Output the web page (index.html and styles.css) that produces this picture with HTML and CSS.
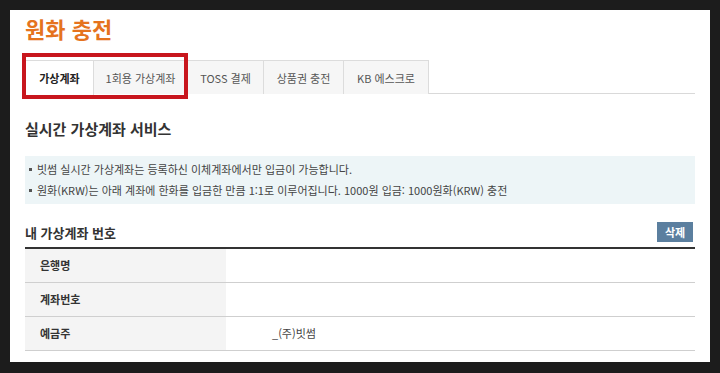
FILE: index.html
```html
<!DOCTYPE html>
<html lang="ko">
<head>
    <meta charset="UTF-8">
    <meta name="viewport" content="width=device-width, initial-scale=1.0">
    <title>원화 충전</title>
    <link rel="stylesheet" href="styles.css">
</head>
<body>

    <div class="page">
        <!-- Title -->
        <h1 class="page-title">원화 충전</h1>

        <!-- Tabs -->
        <div class="tabs">
            <a href="#" class="tab active">가상계좌</a>
            <a href="#" class="tab">1회용 가상계좌</a>
            <a href="#" class="tab">TOSS 결제</a>
            <a href="#" class="tab">상품권 충전</a>
            <a href="#" class="tab">KB 에스크로</a>
            <div class="highlight"></div>
        </div>

        <h2 class="section-title">실시간 가상계좌 서비스</h2>

        <ul class="notice">
            <li>빗썸 실시간 가상계좌는 등록하신 이체계좌에서만 입금이 가능합니다.</li>
            <li>원화(KRW)는 아래 계좌에 한화를 입금한 만큼 1:1로 이루어집니다. 1000원 입금: 1000원화(KRW) 충전</li>
        </ul>

        <div class="account-head">
            <h3>내 가상계좌 번호</h3>
            <button class="btn-delete">삭제</button>
        </div>

        <table class="account-table">
            <tr>
                <th>은행명</th>
                <td></td>
            </tr>
            <tr>
                <th>계좌번호</th>
                <td></td>
            </tr>
            <tr>
                <th>예금주</th>
                <td>_(주)빗썸</td>
            </tr>
        </table>
    </div>

</body>
</html>
```

FILE: styles.css
```css
* {
    margin: 0;
    padding: 0;
    box-sizing: border-box;
    font-family: "Noto Sans CJK KR", "Noto Sans", sans-serif;
}

body {
    background: #1c1c1c;
    padding: 10px;
    width: 720px;
    height: 373px;
    overflow: hidden;
}

.page {
    background: #fff;
    width: 700px;
    height: 352px;
    padding: 4px 15px 0 15px;
}

/* Title */
.page-title {
    font-size: 22px;
    line-height: 28px;
    font-weight: bold;
    color: #e5731e;
}

/* Tabs */
.tabs {
    position: relative;
    display: flex;
    margin-top: 18px;
    border-bottom: 1px solid #d9d9d9;
    height: 34px;
}

.tab {
    display: flex;
    align-items: center;
    justify-content: center;
    flex-shrink: 0;
    white-space: nowrap;
    height: 34px;
    font-size: 11px;
    color: #555;
    text-decoration: none;
    background: #f6f6f6;
    border: 1px solid #dcdcdc;
    border-bottom: none;
    margin-right: -1px;
}

.tab:nth-child(2) { width: 95px; }
.tab:nth-child(3) { width: 77px; }
.tab:nth-child(4) { width: 81px; }
.tab:nth-child(5) { width: 86px; }

.tab.active {
    width: 69px;
    background: #fff;
    color: #222;
    font-weight: bold;
    height: 35px;
}

.highlight {
    position: absolute;
    left: -3px;
    top: -7px;
    width: 166px;
    height: 46px;
    border: 4px solid #c8161d;
    pointer-events: none;
}

/* Section */
.section-title {
    margin-top: 24px;
    font-size: 15px;
    line-height: 22px;
    font-weight: bold;
    color: #333;
}

.notice {
    list-style: none;
    margin-top: 16px;
    background: #edf5f7;
    padding: 3px 4px;
}

.notice li {
    font-size: 11px;
    line-height: 21px;
    color: #444;
    display: flex;
    align-items: center;
}

.notice li::before {
    content: "";
    width: 3px;
    height: 3px;
    background: #555;
    margin-right: 5px;
}

/* Account */
.account-head {
    display: flex;
    justify-content: space-between;
    align-items: center;
    margin-top: 18px;
    height: 20px;
    margin-bottom: 5px;
}

.account-head h3 {
    font-size: 13px;
    font-weight: bold;
    color: #333;
}

.btn-delete {
    background: #5b7f9f;
    color: #fff;
    border: none;
    font-size: 11px;
    font-weight: bold;
    width: 36px;
    height: 20px;
    margin-right: 2px;
}

.account-table {
    width: 100%;
    border-collapse: collapse;
    border-top: 2px solid #333;
}

.account-table th,
.account-table td {
    height: 34px;
    border-bottom: 1px solid #cfcfcf;
    font-size: 11px;
    text-align: left;
}

.account-table th {
    width: 201px;
    background: #f4f4f4;
    padding-left: 15px;
    color: #333;
}

.account-table td {
    padding-left: 46px;
    color: #444;
}
```
